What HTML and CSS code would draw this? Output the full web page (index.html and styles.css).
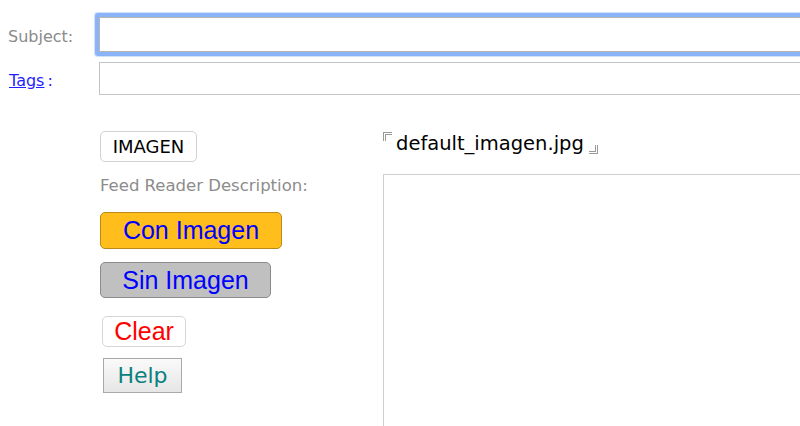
FILE: index.html
```html
<!DOCTYPE html>
<html lang="es">
  <head>
    <meta charset="UTF-8" />
    <title>Entrada</title>
    <link rel="stylesheet" href="styles.css">
  </head>
  <body>
    <div class="form">
      <div class="field-row row-subject">
        <label class="field-label" for="subject">Subject:</label>
        <input type="text" id="subject" class="text-input focused" />
      </div>
      <div class="field-row row-tags">
        <span class="field-label"><a href="#" class="tags-link">Tags</a><span class="tags-colon">:</span></span>
        <input type="text" id="tags" class="text-input" />
      </div>

      <div class="media">
        <div class="media-left">
          <button type="button" class="btn-imagen">IMAGEN</button>
          <div class="feed-label">Feed Reader Description:</div>
          <button type="button" class="btn-big btn-con">Con Imagen</button>
          <button type="button" class="btn-big btn-sin">Sin Imagen</button>
          <button type="button" class="btn-big btn-clear">Clear</button>
          <button type="button" class="btn-help">Help</button>
        </div>
        <div class="media-right">
          <div class="file-name">
            <span class="corner corner-open"></span>default_imagen.jpg<span class="corner corner-close"></span>
          </div>
          <textarea class="description"></textarea>
        </div>
      </div>
    </div>
  </body>
</html>
```

FILE: styles.css
```css
html,
body {
  margin: 0;
  padding: 0;
  background: #ffffff;
  overflow: hidden;
}

body {
  font-family: "DejaVu Sans", sans-serif;
  color: #000;
}

.form {
  width: 800px;
  height: 426px;
  box-sizing: border-box;
  padding-top: 17px;
  overflow: hidden;
}

.field-row {
  display: flex;
  align-items: center;
}

.row-tags {
  margin-top: 10px;
}

.field-label {
  width: 91px;
  padding-left: 8px;
  padding-top: 3px;
  font-size: 16px;
  color: #8a8a8a;
  flex-shrink: 0;
}

.tags-link,
.tags-colon {
  color: #1f1fff;
}

.tags-link {
  margin-left: 1px;
}

.tags-colon {
  margin-left: 3px;
}

.text-input {
  width: 760px;
  flex-shrink: 0;
  height: 35px;
  box-sizing: border-box;
  border: 1px solid #c4c4c4;
  background: #fff;
  padding: 0 6px;
  font-size: 14px;
  margin: 0;
}

.row-tags .text-input {
  height: 33px;
}

.focused {
  outline: none;
  border-color: #b9b4ad;
  border-radius: 1px;
  box-shadow: 0 0 0 4px #8ab3f8, 0 0 0 5px #d3e2fc;
}

.media {
  display: flex;
  margin-top: 36px;
}

.media-left {
  width: 283px;
  flex-shrink: 0;
  padding-left: 100px;
  display: flex;
  flex-direction: column;
  align-items: flex-start;
}

button {
  margin: 0;
  cursor: pointer;
  box-sizing: border-box;
}

.btn-imagen {
  width: 97px;
  height: 31px;
  background: #fff;
  border: 1px solid #d2d2d2;
  border-radius: 5px;
  font-family: "DejaVu Sans", sans-serif;
  font-size: 18px;
  color: #000;
  padding: 0;
}

.feed-label {
  margin-top: 13px;
  line-height: 22px;
  font-size: 16.5px;
  color: #8c8c8c;
  white-space: nowrap;
}

.btn-big {
  font-family: "Liberation Sans", Arial, sans-serif;
  font-size: 25px;
  color: #0000ff;
  border-radius: 5px;
  padding: 0;
}

.btn-con {
  margin-top: 15px;
  width: 182px;
  height: 37px;
  background: #ffbe1c;
  border: 1px solid #b98a1a;
}

.btn-sin {
  margin-top: 13px;
  width: 171px;
  height: 36px;
  background: #c0c0c0;
  border: 1px solid #8b8b8b;
}

.btn-clear {
  margin-top: 18px;
  margin-left: 2px;
  width: 84px;
  height: 31px;
  background: #fff;
  border: 1px solid #d6d6d6;
  color: #ff0000;
}

.btn-help {
  margin-top: 11px;
  margin-left: 3px;
  width: 79px;
  height: 35px;
  background: linear-gradient(#fafafa, #e6e6e6);
  border: 1px solid #a9a9a9;
  border-radius: 0;
  font-family: "DejaVu Sans", sans-serif;
  font-size: 22px;
  color: #0a8080;
  padding: 0;
}

.media-right {
  flex: 1;
  display: flex;
  flex-direction: column;
}

.file-name {
  font-size: 19.5px;
  line-height: 28px;
  margin-top: -1px;
  color: #000;
  white-space: nowrap;
}

.corner {
  display: inline-block;
  width: 6px;
  height: 6px;
}

.corner-open {
  border-top: 3px double #9a9a9a;
  border-left: 3px double #9a9a9a;
  vertical-align: 9px;
  margin-right: 4px;
}

.corner-close {
  border-bottom: 3px double #9a9a9a;
  border-right: 3px double #9a9a9a;
  vertical-align: -4px;
  margin-left: 5px;
}

.description {
  margin-top: 16px;
  width: 600px;
  height: 300px;
  border: 1px solid #cfcfcf;
  border-right: none;
  border-bottom: none;
  resize: none;
  padding: 0;
  box-sizing: border-box;
}
```
